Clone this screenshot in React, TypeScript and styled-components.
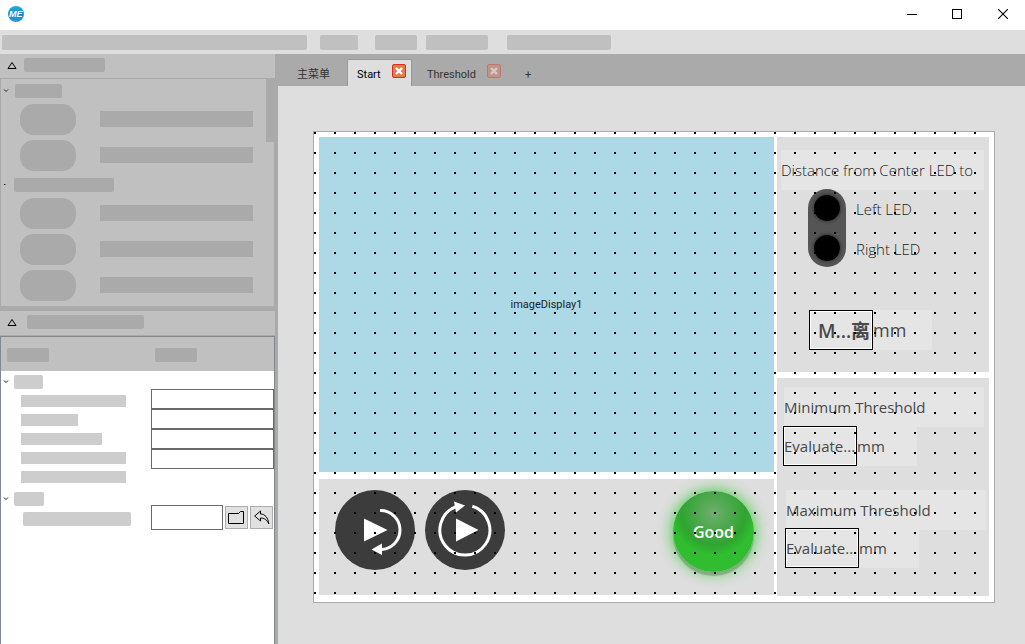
import React from "react";
import styled, { createGlobalStyle } from "styled-components";

const ui = `"Open Sans", "Noto Sans", "Noto Sans CJK SC", sans-serif`;
const small = `Roboto, "Noto Sans CJK SC", sans-serif`;

const GlobalStyle = createGlobalStyle`
  *, *::before, *::after { box-sizing: border-box; }
  html, body, #root { height: 100%; }
  body { margin: 0; font-family: ${ui}; font-size: 11px; color: #333; background: #aaa; }
  button, input { font: inherit; color: inherit; padding: 0; margin: 0; }
  svg { display: block; }
`;

const Window = styled.div`
  display: flex;
  flex-direction: column;
  min-height: 100%;
`;

const TitleBar = styled.header`
  display: flex;
  align-items: center;
  justify-content: space-between;
  height: 30px;
  padding: 0 0 2px 8px;
  background: #fff;
`;

const WindowControls = styled.div`
  display: flex;
  height: 28px;
`;

const WindowButton = styled.button`
  display: grid;
  place-items: center;
  width: 45px;
  border: 0;
  background: none;
  color: #000;
`;

const MenuBar = styled.nav`
  display: flex;
  align-items: center;
  height: 24px;
  padding-left: 2px;
  background: #dedede;
`;

const Block = styled.span<{ $w: number; $h?: number; $tone?: string; $ml?: number; $square?: boolean }>`
  display: block;
  flex: none;
  width: ${(p) => p.$w}px;
  height: ${(p) => p.$h ?? 14}px;
  margin-left: ${(p) => p.$ml ?? 0}px;
  border-radius: ${(p) => (p.$square ? 0 : 2)}px;
  background: ${(p) => p.$tone ?? "#aaa"};
`;

const Body = styled.div`
  display: flex;
  flex: 1;
`;

const Sidebar = styled.aside`
  display: flex;
  flex-direction: column;
  flex: none;
  width: 278px;
  padding-right: 3px;
  background: #aaa;
`;

const PanelHeader = styled.div`
  display: flex;
  align-items: center;
  height: 24px;
  padding: 0 0 2px 7px;
  background: #c0c0c0;
`;

const Tree = styled.div`
  display: flex;
  height: 228px;
  margin-bottom: 5px;
  border: solid #aaa;
  border-width: 1px 1px 0 1px;
  background: #c0c0c0;
`;

const TreeItems = styled.div`
  flex: 1;
`;

const ScrollThumb = styled.div`
  width: 8px;
  height: 63px;
  background: #aaa;
`;

const GroupRow = styled.div`
  display: flex;
  align-items: center;
  height: 22px;
  padding: 2px 0 0 2px;
`;

const ToolRow = styled.div`
  display: flex;
  align-items: center;
  height: 36px;
  padding-left: 19px;
  gap: 24px;
`;

const Pill = styled.span`
  width: 56px;
  height: 31px;
  border-radius: 14px;
  background: #aaa;
`;

const Properties = styled.section`
  flex: 1;
  margin-top: 1px;
  border: solid #828790;
  border-width: 1px 1px 0 1px;
  background: #fff;
`;

const PropertyHead = styled.div`
  display: grid;
  grid-template-columns: 148px 1fr;
  align-items: center;
  height: 34px;
  padding: 2px 0 0 6px;
  background: #c0c0c0;
`;

const PropertyGroup = styled.div`
  display: grid;
  grid-template-columns: 150px 1fr;
  padding-bottom: 5px;
`;

const Labels = styled.div`
  display: flex;
  flex-direction: column;
  padding-top: 4px;
  gap: 7px;
`;

const LabelTitle = styled.div`
  display: flex;
  align-items: center;
  margin-bottom: -1px;
  padding-left: 2px;
`;

const Fields = styled.div`
  display: flex;
  flex-direction: column;
  padding-top: 18px;
`;

const Field = styled.input`
  width: 100%;
  height: 20px;
  border: 1px solid #696969;
  border-radius: 0;
  background: #fff;
`;

const FileRow = styled.div`
  display: grid;
  grid-template-columns: 1fr 23px 23px;
  align-items: center;
  gap: 2px;
  padding: 17px 1px 0 0;
`;

const FileField = styled(Field)`
  height: 25px;
`;

const IconButton = styled.button`
  display: grid;
  place-items: center;
  height: 23px;
  border: 1px solid #adadad;
  background: #e1e1e1;
  color: #000;
`;

const Workspace = styled.main`
  display: flex;
  flex-direction: column;
  flex: 1;
  min-width: 0;
  background: #dedede;
`;

const TabBar = styled.div`
  display: flex;
  align-items: flex-end;
  height: 32px;
  padding-left: 4px;
  background: #aaa;
  font-family: ${small};
`;

const Tab = styled.div<{ $active?: boolean }>`
  display: flex;
  align-items: flex-start;
  min-width: 65px;
  height: 27px;
  padding: ${(p) => (p.$active ? "4px 5px 0 9px" : "4px 8px 0 14px")};
  gap: 11px;
  border: solid ${(p) => (p.$active ? "#999" : "transparent")};
  border-width: 1px 1px 0 1px;
  border-radius: 2px 2px 0 0;
  background: ${(p) => (p.$active ? "#dedede" : "transparent")};
`;

const TabLabel = styled.button<{ $active?: boolean }>`
  height: 16px;
  margin-top: 3px;
  border: 0;
  background: none;
  line-height: 16px;
  white-space: nowrap;
  color: ${(p) => (p.$active ? "#000" : "#333")};
`;

const CloseButton = styled.button<{ $faded?: boolean }>`
  display: grid;
  place-items: center;
  width: 14px;
  height: 14px;
  border: 1px solid #d9301a;
  border-radius: 2px;
  background: #e07a50;
  opacity: ${(p) => (p.$faded ? 0.4 : 1)};
`;

const Form = styled.div`
  position: relative;
  display: grid;
  grid-template-columns: minmax(0, 1fr) 212px;
  gap: 3px;
  margin: 45px 30px 41px 35px;
  padding: 5px 5px 6px 5px;
  border: 1px solid #aaa;
  background: #fff;
  color: #484848;

  &::after {
    content: "";
    position: absolute;
    inset: 0;
    pointer-events: none;
    background: conic-gradient(from 270deg at 2px 2px, #000 90deg, transparent 0) 0 0 / 20px 20px;
  }
`;

const Column = styled.div<{ $gap: number }>`
  display: flex;
  flex-direction: column;
  gap: ${(p) => p.$gap}px;
`;

const ImageDisplay = styled.div`
  display: grid;
  place-items: center;
  height: 335px;
  background: #add8e6;
  font-family: ${small};
  font-size: 11px;
  color: #222;
`;

const ActionBar = styled.div`
  display: flex;
  align-items: flex-start;
  gap: 10px;
  height: 116px;
  padding: 11px 20px 0 16px;
  background: #dedede;
`;

const RoundButton = styled.button`
  width: 80px;
  height: 80px;
  border: 0;
  border-radius: 50%;
  background: #3c3c3c;
`;

const StatusLamp = styled.div`
  display: grid;
  place-items: center;
  width: 81px;
  height: 81px;
  margin: 1px 0 0 auto;
  border-radius: 50%;
  background: radial-gradient(circle at 50% 27%, #6fae6f 0, #2fa430 32px, #30bd30 42px);
  box-shadow: 0 4px 1px rgba(90, 110, 90, 0.4), 0 0 14px 2px rgba(48, 200, 48, 0.75);
  font-size: 16px;
  font-weight: 600;
  color: #fff;
`;

const Card = styled.section<{ $h: number; $pt: number }>`
  height: ${(p) => p.$h}px;
  padding-top: ${(p) => p.$pt}px;
  background: #dedede;
`;

const Caption = styled.div<{ $w: number; $ml: number; $mt?: number; $light?: boolean }>`
  width: ${(p) => p.$w}px;
  height: 40px;
  margin: ${(p) => p.$mt ?? 0}px 0 0 ${(p) => p.$ml}px;
  background: #e5e5e5;
  font-size: 15px;
  font-weight: ${(p) => (p.$light ? 300 : 400)};
  color: ${(p) => (p.$light ? "#1c1c1c" : "inherit")};
  line-height: 41px;
  white-space: nowrap;
`;

const LedGroup = styled.div`
  display: flex;
  gap: 10px;
  margin: -1px 0 0 31px;
`;

const LedBody = styled.div`
  display: flex;
  flex-direction: column;
  align-items: center;
  gap: 14px;
  width: 38px;
  height: 78px;
  padding-top: 6px;
  border-radius: 19px;
  background: #555;
`;

const Led = styled.span`
  width: 26px;
  height: 26px;
  border-radius: 50%;
  background: #000;
  box-shadow: 0 0 2px 2px #444;
`;

const LedLabels = styled.div`
  font-size: 15px;
  font-weight: 300;
  line-height: 40px;
  color: #1c1c1c;
`;

const Reading = styled.div<{ $mt: number; $ml: number }>`
  display: flex;
  margin: ${(p) => p.$mt}px 0 0 ${(p) => p.$ml}px;
`;

const ReadingValue = styled.input<{ $w: number; $strong?: boolean }>`
  width: ${(p) => p.$w}px;
  height: 40px;
  padding-left: ${(p) => (p.$strong ? 8 : 0)}px;
  border: 1px solid #000;
  border-radius: 0;
  background: #e5e5e5;
  box-shadow: inset 0 0 0 1px #fff;
  font-size: ${(p) => (p.$strong ? 19 : 15)}px;
  font-weight: ${(p) => (p.$strong ? 600 : 400)};
`;

const Unit = styled.span<{ $large?: boolean }>`
  width: ${(p) => (p.$large ? 59 : 60)}px;
  height: 40px;
  background: #e5e5e5;
  font-size: ${(p) => (p.$large ? 18 : 15)}px;
  line-height: 41px;
`;

const LogoIcon = () => (
  <svg width="16" height="16" viewBox="0 0 16 16" role="img" aria-label="ME">
    <defs>
      <linearGradient id="logo" x1="0" y1="0" x2="0" y2="1">
        <stop offset="0" stopColor="#22aee2" />
        <stop offset="0.5" stopColor="#0a8fd2" />
        <stop offset="1" stopColor="#3a93d0" />
      </linearGradient>
    </defs>
    <circle cx="8" cy="8" r="8" fill="url(#logo)" />
    <text x="7.8" y="11.2" textAnchor="middle" fontFamily="Liberation Sans" fontSize="9" fontWeight="700" fontStyle="italic" fill="#fff">ME</text>
  </svg>
);

const Triangle = () => (
  <svg width="10" height="8" viewBox="0 0 10 8" fill="none" stroke="#000">
    <path d="M1 7.5 5 1.5 9 7.5Z" />
  </svg>
);

const Chevron = ({ dot }: { dot?: boolean }) => (
  <svg width="6" height="6" viewBox="0 0 6 6" fill="none" stroke="#222">
    {dot ? <path d="M1 2.5h1.5" /> : <path d="M1 1.5 3 3.5 5 1.5" />}
  </svg>
);

const Cross = () => (
  <svg width="8" height="8" viewBox="0 0 8 8" stroke="#fff" strokeWidth="2.4">
    <path d="M1 1 7 7M7 1 1 7" />
  </svg>
);

const fieldNames = ["Field 1", "Field 2", "Field 3", "Field 4"];

export default function App() {
  return (
    <Window>
      <GlobalStyle />
      <TitleBar>
        <LogoIcon />
        <WindowControls>
          <WindowButton aria-label="Minimize">
            <svg width="11" height="10"><path d="M0 5.5H10" stroke="#000" /></svg>
          </WindowButton>
          <WindowButton aria-label="Maximize">
            <svg width="11" height="10"><rect x=".5" y=".5" width="9" height="9" fill="none" stroke="#000" /></svg>
          </WindowButton>
          <WindowButton aria-label="Close">
            <svg width="10" height="10"><path d="M0 0 10 10M10 0 0 10" stroke="#000" strokeWidth="1.1" /></svg>
          </WindowButton>
        </WindowControls>
      </TitleBar>
      <MenuBar>
        <Block $w={305} $h={15} $tone="#c0c0c0" />
        <Block $w={38} $h={15} $ml={13} $tone="#c0c0c0" />
        <Block $w={42} $h={15} $ml={17} $tone="#c0c0c0" />
        <Block $w={62} $h={15} $ml={9} $tone="#c0c0c0" />
        <Block $w={104} $h={15} $ml={19} $tone="#c0c0c0" />
      </MenuBar>
      <Body>
        <Sidebar>
          <PanelHeader>
            <Triangle />
            <Block $w={81} $ml={7} />
          </PanelHeader>
          <Tree>
            <TreeItems>
              <GroupRow>
                <Chevron />
                <Block $w={47} $ml={6} />
              </GroupRow>
              {[1, 2].map((n) => (
                <ToolRow key={n}>
                  <Pill />
                  <Block $w={153} $h={16} $square />
                </ToolRow>
              ))}
              <GroupRow>
                <Chevron dot />
                <Block $w={100} $ml={5} />
              </GroupRow>
              {[1, 2, 3].map((n) => (
                <ToolRow key={n}>
                  <Pill />
                  <Block $w={153} $h={16} $square />
                </ToolRow>
              ))}
            </TreeItems>
            <ScrollThumb />
          </Tree>
          <PanelHeader>
            <Triangle />
            <Block $w={117} $ml={10} />
          </PanelHeader>
          <Properties>
            <PropertyHead>
              <Block $w={42} />
              <Block $w={42} />
            </PropertyHead>
            <PropertyGroup>
              <Labels>
                <LabelTitle>
                  <Chevron />
                  <Block $w={29} $ml={5} $tone="#cdcdcd" />
                </LabelTitle>
                {[105, 57, 81, 105, 105].map((w, i) => (
                  <Block key={i} $w={w} $h={12} $ml={20} $square $tone="#cdcdcd" />
                ))}
              </Labels>
              <Fields>
                {fieldNames.map((n) => (
                  <Field key={n} aria-label={n} />
                ))}
              </Fields>
            </PropertyGroup>
            <PropertyGroup>
              <Labels>
                <LabelTitle>
                  <Chevron />
                  <Block $w={30} $ml={5} $tone="#cdcdcd" />
                </LabelTitle>
                <Block $w={108} $ml={22} $tone="#cdcdcd" />
              </Labels>
              <FileRow>
                <FileField aria-label="File" />
                <IconButton aria-label="Browse">
                  <svg width="17" height="14" viewBox="0 0 17 14" fill="none" stroke="#000">
                    <path d="M.5 2.5H10.5L12.5.5H15.5V12.5H.5Z" />
                  </svg>
                </IconButton>
                <IconButton aria-label="Undo">
                  <svg width="16" height="15" viewBox="0 0 16 15" fill="none" stroke="#000">
                    <path d="M.7 6 6.5 1V4C11 4 14 7.5 14.8 14 13 10 10.5 8 6.5 8V11Z" />
                  </svg>
                </IconButton>
              </FileRow>
            </PropertyGroup>
          </Properties>
        </Sidebar>
        <Workspace>
          <TabBar>
            <Tab><TabLabel>主菜单</TabLabel></Tab>
            <Tab $active>
              <TabLabel $active>Start</TabLabel>
              <CloseButton aria-label="Close Start"><Cross /></CloseButton>
            </Tab>
            <Tab>
              <TabLabel>Threshold</TabLabel>
              <CloseButton aria-label="Close Threshold" $faded><Cross /></CloseButton>
            </Tab>
            <Tab><TabLabel aria-label="New tab">+</TabLabel></Tab>
          </TabBar>
          <Form>
            <Column $gap={7}>
              <ImageDisplay>imageDisplay1</ImageDisplay>
              <ActionBar>
                <RoundButton aria-label="Run once">
                  <svg width="80" height="80" viewBox="0 0 80 80">
                    <path d="M29 28.5V51.5L52.5 40Z" fill="#fff" />
                    <path d="M45 20.5A19.5 19.5 0 0 1 46 59.5" fill="none" stroke="#fff" strokeWidth="3" />
                    <path d="M36.5 59.5 47 53.5V65Z" fill="#fff" />
                  </svg>
                </RoundButton>
                <RoundButton aria-label="Run continuously">
                  <svg width="80" height="80" viewBox="0 0 80 80">
                    <path d="M31 28.5V51.5L53.5 40Z" fill="#fff" />
                    <path d="M47.3 16.2A25 25 0 1 1 31 16.7" fill="none" stroke="#fff" strokeWidth="3" />
                    <path d="M29 11.5 40 15.5 31 22.5Z" fill="#fff" />
                  </svg>
                </RoundButton>
                <StatusLamp>Good</StatusLamp>
              </ActionBar>
            </Column>
            <Column $gap={6}>
              <Card $h={235} $pt={13}>
                <Caption $w={203} $ml={4} $light>Distance from Center LED to</Caption>
                <LedGroup>
                  <LedBody><Led /><Led /></LedBody>
                  <LedLabels>
                    <div>Left LED</div>
                    <div>Right LED</div>
                  </LedLabels>
                </LedGroup>
                <Reading $mt={41} $ml={32}>
                  <ReadingValue $w={64} $strong aria-label="Distance" defaultValue="M...离" />
                  <Unit $large>mm</Unit>
                </Reading>
              </Card>
              <Card $h={218} $pt={9}>
                <Caption $w={200} $ml={7}>Minimum Threshold</Caption>
                <Reading $mt={-1} $ml={6}>
                  <ReadingValue $w={74} aria-label="Minimum Threshold" defaultValue="Evaluate..." />
                  <Unit>mm</Unit>
                </Reading>
                <Caption $w={200} $ml={9} $mt={24}>Maximum Threshold</Caption>
                <Reading $mt={-2} $ml={8}>
                  <ReadingValue $w={74} aria-label="Maximum Threshold" defaultValue="Evaluate..." />
                  <Unit>mm</Unit>
                </Reading>
              </Card>
            </Column>
          </Form>
        </Workspace>
      </Body>
    </Window>
  );
}
